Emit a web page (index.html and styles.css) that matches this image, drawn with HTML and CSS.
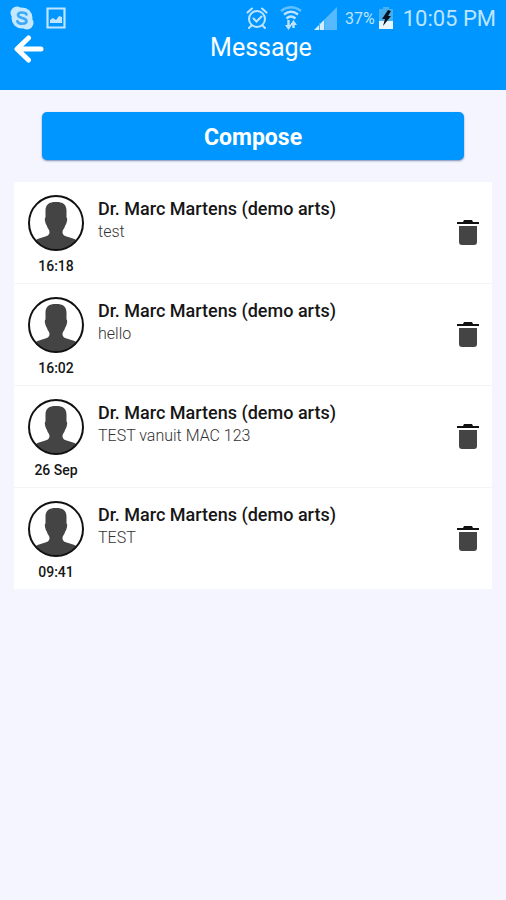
FILE: index.html
```html
<!DOCTYPE html>
<html lang="en">
<head>
  <meta charset="UTF-8">
  <meta name="viewport" content="width=device-width, initial-scale=1.0">
  <title>Message</title>
  <link rel="stylesheet" href="styles.css">
</head>
<body>
  <svg class="sprite" aria-hidden="true">
    <symbol id="avatar" viewBox="0 0 56 56">
      <circle cx="28" cy="28" r="27" fill="#fff"/>
      <path fill="#444" d="M28 7c7 0 10.500 2.500 10.500 8.500v7c1.100.5.800 3.500-.2 6-.6 1.500-.9 1.500-1.400 3-.6 2-2.400 3.500-2.400 5.500 0 3 2 3.800 5 4.800l7 2.200c1.200.5 1.800 1.200 2 2A27 27 0 0 1 7.500 46c.2-.8.800-1.500 2-2l7-2.200c3-1 5-1.800 5-4.800 0-2-1.800-3.500-2.400-5.500-.5-1.500-.8-1.500-1.400-3-1-2.500-1.300-5.500-.2-6v-7C17.500 9.500 21 7 28 7z"/>
      <circle cx="28" cy="28" r="27" fill="none" stroke="#111" stroke-width="2"/>
    </symbol>
    <symbol id="trash" viewBox="0 0 22 26">
      <path fill="#111" d="M7 1h8l1 2h6v2H0V3h6z"/>
      <path fill="#444" d="M2 7h18v16q0 3-3 3H5q-3 0-3-3z"/>
    </symbol>
  </svg>

  <header class="header">
    <div class="status-bar">
      <div class="status-left">
        <svg width="24" height="24" viewBox="0 0 24 24">
          <g fill="#c5e8ff">
            <circle cx="12" cy="12" r="10.500"/>
            <circle cx="7" cy="7" r="6.500"/>
            <circle cx="17" cy="17" r="6.500"/>
          </g>
          <path d="M16.500 8.500C15.500 6 8 5.500 8 9c0 3.600 8.500 2.200 8.500 6 0 3.700-8 3.500-9.200.2" fill="none" stroke="#3aa9f8" stroke-width="2.600" stroke-linecap="round"/>
        </svg>
        <svg width="20" height="22" viewBox="0 0 20 22">
          <path d="M1.500 1.500h17v19h-17z" fill="none" stroke="#bfe4ff" stroke-width="2.200"/>
          <path d="M4 16v-3l3-2 3 2 3-4 3 1v6z" fill="#bfe4ff"/>
        </svg>
      </div>
      <div class="status-right">
        <svg width="22" height="24" viewBox="0 0 22 24" fill="none" stroke="#bfe4ff" stroke-width="2" stroke-linecap="round">
          <circle cx="11" cy="13" r="8"/>
          <path d="M1.500 6.500 6 2.500M16 2.500l4.500 4M5.500 19.500 3 22M16.500 19.500 19 22M7.500 12.500l3 3 5-5"/>
        </svg>
        <svg class="wifi" width="22" height="24" viewBox="0 0 22 24" fill="none" stroke="#bfe4ff" stroke-width="2.400">
          <path d="M1 5q10-7.500 20 0" stroke="#62bfff"/>
          <path d="M4 8.500q7-5.500 14 0M6.500 12.500q4.500-4 9 0"/>
          <path d="M8.500 14v6M13.500 22v-6"/>
          <path d="m5 19 3.500 5 3.500-5zM10 19l3.500-5 3.500 5z" fill="#bfe4ff" stroke="none"/>
        </svg>
        <svg class="signal" width="23" height="23" viewBox="0 0 23 23">
          <path d="M11 12 23 0v23H11z" fill="#57baff"/>
          <path d="M0 23 11 12v11z" fill="#d5eeff"/>
          <path d="M5.500 16v7M10.500 12v11" stroke="#45b1fc"/>
        </svg>
        <span class="percent">37%</span>
        <svg class="battery" width="14" height="22" viewBox="0 0 14 22">
          <path d="M4 0h6v2h4v12H0V2h4z" fill="#48afee"/>
          <path d="M0 14h14v8H0z" fill="#e6f5ff"/>
          <path d="M9 3 3 12h3L4 19l8-10H9l3-5z" fill="#06131f"/>
        </svg>
        <span class="clock">10:05 PM</span>
      </div>
    </div>
    <div class="title-bar">
      <button class="back" type="button" aria-label="Back">
        <svg width="30" height="28" viewBox="0 0 30 28" fill="none" stroke="#fff" stroke-width="5" stroke-linecap="round" stroke-linejoin="round">
          <path d="M14.500 3 3 14l11.500 11M4 14h23"/>
        </svg>
      </button>
      <h1>Message</h1>
    </div>
  </header>

  <main>
    <button class="compose" type="button">Compose</button>

    <ul class="messages">
      <li class="message">
        <div class="sender">
          <svg class="avatar"><use href="#avatar"/></svg>
          <time>16:18</time>
        </div>
        <div class="body">
          <h2>Dr. Marc Martens (demo arts)</h2>
          <p>test</p>
        </div>
        <button class="delete" type="button" aria-label="Delete"><svg><use href="#trash"/></svg></button>
      </li>
      <li class="message">
        <div class="sender">
          <svg class="avatar"><use href="#avatar"/></svg>
          <time>16:02</time>
        </div>
        <div class="body">
          <h2>Dr. Marc Martens (demo arts)</h2>
          <p>hello</p>
        </div>
        <button class="delete" type="button" aria-label="Delete"><svg><use href="#trash"/></svg></button>
      </li>
      <li class="message">
        <div class="sender">
          <svg class="avatar"><use href="#avatar"/></svg>
          <time>26 Sep</time>
        </div>
        <div class="body">
          <h2>Dr. Marc Martens (demo arts)</h2>
          <p>TEST vanuit MAC 123</p>
        </div>
        <button class="delete" type="button" aria-label="Delete"><svg><use href="#trash"/></svg></button>
      </li>
      <li class="message">
        <div class="sender">
          <svg class="avatar"><use href="#avatar"/></svg>
          <time>09:41</time>
        </div>
        <div class="body">
          <h2>Dr. Marc Martens (demo arts)</h2>
          <p>TEST</p>
        </div>
        <button class="delete" type="button" aria-label="Delete"><svg><use href="#trash"/></svg></button>
      </li>
    </ul>
  </main>
</body>
</html>
```
FILE: styles.css
```css
:root {
  --bg: #f4f5ff;
  --primary: #0096ff;
  --status: #bfe4ff;
  --text: #161616;
  --muted: #333;
  --line: #f4f4f6;
}
* {
  box-sizing: border-box;
}
body {
  margin: 0;
  background: var(--bg);
  color: var(--text);
  font-family: Roboto, "Liberation Sans", sans-serif;
}
button {
  padding: 0;
  border: none;
  background: none;
  font-family: inherit;
  cursor: pointer;
}
svg {
  display: block;
}
.sprite {
  display: none;
}

/* Header */
.header {
  padding-bottom: 24px;
  background: var(--primary);
}
.status-bar {
  display: flex;
  justify-content: space-between;
  align-items: center;
  height: 32px;
  padding: 4px 10px 0;
  color: var(--status);
}
.status-left,
.status-right {
  display: flex;
  align-items: center;
}
.status-left {
  gap: 12px;
}
.wifi,
.signal {
  margin-left: 12px;
}
.percent {
  margin-left: 8px;
  font-size: 16px;
}
.battery {
  margin: 0 10px 0 4px;
}
.clock {
  font-size: 22px;
}
.title-bar {
  display: grid;
  grid-template-columns: 32px 1fr 16px;
  align-items: start;
  height: 34px;
  padding: 0 14px;
}
.back {
  margin-top: 3px;
}
.title-bar h1 {
  margin: 0;
  color: #fff;
  font-size: 25px;
  font-weight: 400;
  line-height: 32px;
  text-align: center;
}

/* Content */
main {
  padding: 22px 14px;
}
.compose {
  display: block;
  width: calc(100% - 56px);
  height: 48px;
  margin: 0 auto 22px;
  padding-top: 2px;
  border-radius: 5px;
  background: var(--primary);
  box-shadow: 0 1px 2px rgba(0, 40, 100, 0.5);
  color: #fff;
  font-size: 23px;
  font-weight: 700;
}
.messages {
  margin: 0;
  padding: 0;
  list-style: none;
  background: #fff;
}
.message {
  display: flex;
  align-items: flex-start;
  padding: 13px 13px 8px 14px;
}
.message + .message {
  border-top: 1px solid var(--line);
}
.sender {
  display: flex;
  flex-direction: column;
  align-items: center;
  gap: 7px;
  width: 56px;
}
.avatar {
  width: 56px;
  height: 56px;
}
.sender time {
  font-size: 14px;
  font-weight: 500;
  line-height: 17px;
  white-space: nowrap;
}
.body {
  flex: 1;
  margin: 2px 14px 0;
}
.body h2 {
  margin: 0;
  font-size: 18px;
  font-weight: 500;
  line-height: 24px;
}
.body p {
  margin: 0;
  color: var(--muted);
  font-size: 16px;
  font-weight: 300;
  line-height: 22px;
}
.delete {
  margin-top: 24px;
}
.delete svg {
  width: 22px;
  height: 26px;
}
```
